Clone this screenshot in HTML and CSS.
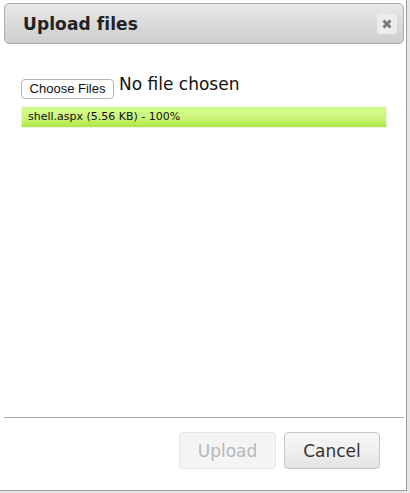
FILE: index.html
```html
<!DOCTYPE html>
<html>
<head>
<meta charset="utf-8">
<link rel="stylesheet" href="styles.css">
</head>
<body>
<div class="dialog">
  <div class="titlebar">
    <span class="title">Upload files</span>
    <button class="close" aria-label="close">
      <svg width="12" height="12" viewBox="0 0 12 12"><path d="M2.5 2.5 L9.5 9.5 M9.5 2.5 L2.5 9.5" stroke="#7a7a7a" stroke-width="3" stroke-linecap="butt"/></svg>
    </button>
  </div>
  <div class="content">
    <div class="file-row">
      <button class="choose">Choose Files</button>
      <span class="nofile">No file chosen</span>
    </div>
    <div class="progress">
      <div class="bar">shell.aspx (5.56 KB) - 100%</div>
    </div>
  </div>
  <div class="sep"></div>
  <div class="footer">
    <button class="btn btn-disabled" disabled>Upload</button>
    <button class="btn">Cancel</button>
  </div>
</div>
</body>
</html>
```

FILE: styles.css
```css
html, body {
  margin: 0;
  padding: 0;
}
body {
  background: #e6e6e6;
  width: 410px;
  height: 493px;
  overflow: hidden;
  font-family: "DejaVu Sans", Verdana, sans-serif;
}
.dialog {
  box-sizing: border-box;
  width: 407px;
  height: 491px;
  background: #fff;
  border-right: 1px solid #9c9c9c;
  border-bottom: 1px solid #9c9c9c;
  padding: 3px 2px 0 4px;
  display: flex;
  flex-direction: column;
}
.titlebar {
  box-sizing: border-box;
  width: 400px;
  height: 41px;
  border: 1px solid #acacac;
  border-radius: 5px;
  background: linear-gradient(#e9e9e9, #cdcdcd);
  display: flex;
  align-items: center;
  justify-content: space-between;
  padding: 0 6px 0 18px;
}
.title {
  font-weight: bold;
  font-size: 17px;
  color: #222;
  letter-spacing: 0.1px;
}
.close {
  width: 20px;
  height: 20px;
  border: none;
  border-radius: 3px;
  background: #ececec;
  padding: 0;
  display: flex;
  align-items: center;
  justify-content: center;
}
.content {
  flex: 1;
  padding: 34px 0 0 17px;
}
.file-row {
  display: flex;
  align-items: center;
  height: 20px;
  gap: 5px;
}
.choose {
  box-sizing: border-box;
  height: 20px;
  width: 93px;
  border: 1px solid #b4b4b4;
  border-radius: 4px;
  background: #fff;
  font-family: "Liberation Sans", Arial, sans-serif;
  font-size: 13px;
  color: #111;
  padding: 0;
  margin-top: 1px;
}
.nofile {
  font-size: 17px;
  color: #111;
  margin-top: -8px;
}
.progress {
  box-sizing: border-box;
  width: 366px;
  height: 22px;
  margin-top: 8px;
  border: 1px solid #eef2ea;
}
.bar {
  height: 100%;
  background: linear-gradient(#d2fb8c, #cdf57e 50%, #aee744);
  font-size: 11px;
  line-height: 20px;
  color: #111;
  padding-left: 6px;
}
.sep {
  width: 400px;
  height: 1px;
  background: #a8a8a8;
}
.footer {
  display: flex;
  justify-content: flex-end;
  gap: 8px;
  padding: 14px 24px 21px 0;
}
.btn {
  box-sizing: border-box;
  height: 37px;
  width: 96px;
  border: 1px solid #c6c6c6;
  border-radius: 4px;
  background: linear-gradient(#f7f7f7, #f0f0f0 50%, #e2e2e2);
  font-family: "DejaVu Sans", Verdana, sans-serif;
  font-size: 17px;
  color: #333;
  padding: 0;
}
.btn-disabled {
  width: 97px;
  background: #f4f4f4;
  border-color: #e6e6e6;
  color: #b8b8b8;
}
```
